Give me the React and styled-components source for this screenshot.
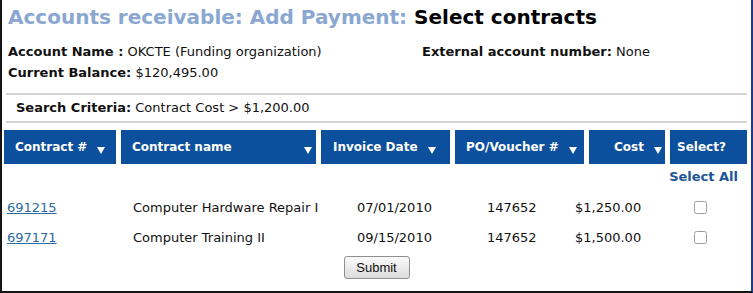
import React from 'react';
import styled, { createGlobalStyle } from 'styled-components';

const GlobalStyle = createGlobalStyle`
  body {
    margin: 0;
    background: #fff;
    font-family: "DejaVu Sans", Verdana, sans-serif;
    color: #111;
  }
`;

const columns = [
  { label: 'Contract #', width: 112, spread: false, left: 11, right: 6, arrow: true },
  { label: 'Contract name', width: 195, spread: true, left: 11, right: 4, arrow: true },
  { label: 'Invoice Date', width: 129, spread: false, left: 12, right: 4, arrow: true },
  { label: 'PO/Voucher #', width: 129, spread: false, left: 11, right: 2, arrow: true },
  { label: 'Cost', width: 76, spread: false, left: 25, right: 2, arrow: true },
  { label: 'Select?', width: 77, spread: false, left: 7, right: 0, arrow: false },
];

const contracts = [
  { id: '691215', name: 'Computer Hardware Repair I', date: '07/01/2010', po: '147652', cost: '$1,250.00' },
  { id: '697171', name: 'Computer Training II', date: '09/15/2010', po: '147652', cost: '$1,500.00' },
];

function Arrow() {
  return (
    <svg width="8" height="7" viewBox="0 0 8 7">
      <polygon points="0,0 8,0 4,7" fill="#fff" />
    </svg>
  );
}

function App() {
  return (
    <>
      <GlobalStyle />
      <Frame>
        <Title>
          <span className="crumb">Accounts receivable: Add Payment:</span> Select contracts
        </Title>
        <InfoGrid>
          <div><b>Account Name :</b> OKCTE (Funding organization)</div>
          <div><b>External account number:</b> None</div>
          <div><b>Current Balance:</b> $120,495.00</div>
        </InfoGrid>
        <Criteria>
          <b>Search Criteria:</b> Contract Cost &gt; $1,200.00
        </Criteria>
        <HeaderRow>
          {columns.map((c) => (
            <HeaderCell
              key={c.label}
              $width={c.width}
              $spread={c.spread}
              $left={c.left}
              $right={c.right}
            >
              <span>{c.label}</span>
              {c.arrow && <Arrow />}
            </HeaderCell>
          ))}
        </HeaderRow>
        <SelectAll>Select All</SelectAll>
        <Rows>
          {contracts.map((r) => (
            <DataRow key={r.id}>
              <ContractLink href="#">{r.id}</ContractLink>
              <span>{r.name}</span>
              <span>{r.date}</span>
              <span>{r.po}</span>
              <span>{r.cost}</span>
              <Check type="checkbox" />
            </DataRow>
          ))}
        </Rows>
        <Actions>
          <SubmitButton>Submit</SubmitButton>
        </Actions>
      </Frame>
    </>
  );
}

const Frame = styled.div`
  width: 749px;
  height: 291px;
  border-left: 2px solid #141414;
  border-right: 2px solid #1d3b8c;
  border-bottom: 2px solid #141414;
  box-sizing: content-box;
  overflow: hidden;
  font-size: 13px;
`;

const Title = styled.h1`
  margin: 0;
  padding: 4px 0 0 6px;
  font-size: 20px;
  font-weight: bold;
  line-height: 26px;
  color: #000;
  .crumb {
    color: #8aa7d1;
  }
`;

const InfoGrid = styled.div`
  display: grid;
  grid-template-columns: 414px 1fr;
  row-gap: 5px;
  padding: 14px 0 0 6px;
  line-height: 16px;
`;

const Criteria = styled.div`
  margin: 12px 4px 0 4px;
  padding: 5px 8px 5px 10px;
  border-top: 2px solid #d4d4d4;
  border-bottom: 2px solid #d4d4d4;
  line-height: 16px;
`;

const HeaderRow = styled.div`
  display: flex;
  gap: 5px;
  margin: 7px 0 0 2px;
`;

const HeaderCell = styled.div`
  width: ${(p) => p.$width}px;
  flex: none;
  height: 34px;
  box-sizing: border-box;
  background: #0c4f9c;
  color: #fff;
  font-weight: bold;
  font-size: 12px;
  white-space: nowrap;
  overflow: hidden;
  display: flex;
  align-items: center;
  justify-content: ${(p) => (p.$spread ? 'space-between' : 'flex-start')};
  gap: 10px;
  padding: 0 ${(p) => p.$right}px 0 ${(p) => p.$left}px;
  svg {
    margin-top: 7px;
    flex: none;
  }
`;

const SelectAll = styled.div`
  text-align: right;
  padding: 5px 13px 0 0;
  font-weight: bold;
  font-size: 13px;
  color: #1c5596;
  line-height: 16px;
`;

const Rows = styled.div`
  margin-top: 7px;
`;

const DataRow = styled.div`
  display: grid;
  grid-template-columns: 126px 224px 130px 88px 119px 20px;
  align-items: center;
  height: 30px;
  padding-left: 5px;
`;

const ContractLink = styled.a`
  color: #2c6aa0;
  text-decoration: underline;
`;

const Check = styled.input`
  margin: 0;
  width: 13px;
  height: 13px;
  accent-color: #bbb;
  opacity: 0.7;
`;

const Actions = styled.div`
  display: flex;
  justify-content: center;
  padding: 4px 0 0 0;
`;

const SubmitButton = styled.button`
  width: 66px;
  height: 23px;
  font-family: "Liberation Sans", Arial, sans-serif;
  font-size: 13px;
  color: #111;
  background: linear-gradient(#fafafa, #dcdcdc);
  border: 1px solid #8f8f8f;
  border-radius: 3px;
  padding: 0;
`;

export default App;
